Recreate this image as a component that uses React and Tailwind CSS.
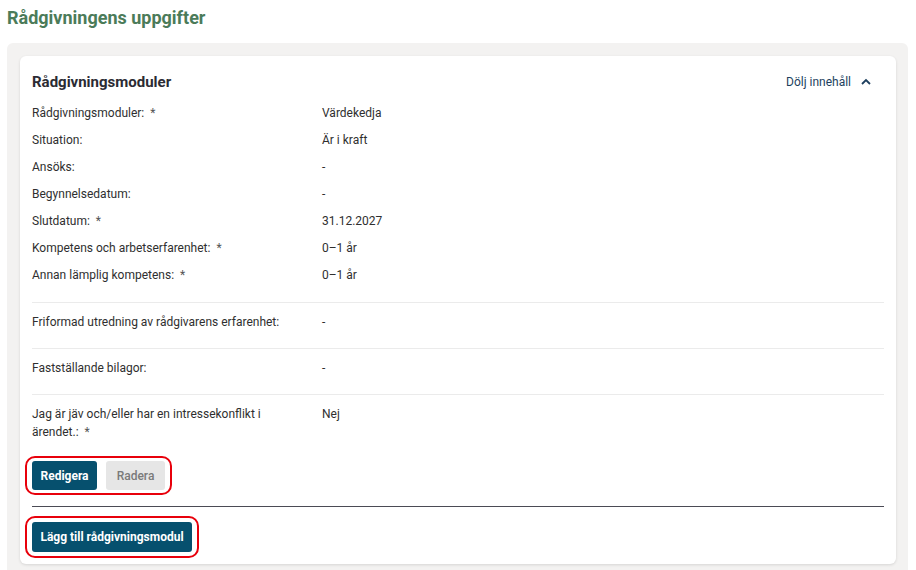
import React from 'react'

const FONT = { fontFamily: 'Roboto, "Liberation Sans", sans-serif' }

const basicRows = [
  { label: 'Rådgivningsmoduler:', required: true, value: 'Värdekedja' },
  { label: 'Situation:', value: 'Är i kraft' },
  { label: 'Ansöks:', value: '-' },
  { label: 'Begynnelsedatum:', value: '-' },
  { label: 'Slutdatum:', required: true, value: '31.12.2027' },
  { label: 'Kompetens och arbetserfarenhet:', required: true, value: '0–1 år' },
  { label: 'Annan lämplig kompetens:', required: true, value: '0–1 år' },
]

const sections = [
  { label: 'Friformad utredning av rådgivarens erfarenhet:', value: '-' },
  { label: 'Fastställande bilagor:', value: '-' },
  { label: 'Jag är jäv och/eller har en intressekonflikt i ärendet.:', required: true, value: 'Nej' },
]

function Label({ text, required }) {
  return (
    <span>
      {text}
      {required && <span className="ml-[6px] text-[#555]">*</span>}
    </span>
  )
}

export default function App() {
  return (
    <div className="min-h-screen bg-white pl-[7px] pr-[8px] text-[#2f2f2f]" style={FONT}>
      <h1 className="pt-[6px] text-[18px] font-bold leading-6 text-[#4b7b59]">
        Rådgivningens uppgifter
      </h1>

      <div className="mt-[13px] rounded-t-md bg-[#f3f2f1] pl-[13px] pr-[12px] pt-[13px] pb-[7px]">
        <div className="rounded-md bg-white px-3 pt-[14px] pb-[6px] shadow-[0_1px_3px_rgba(0,0,0,0.12)]">
          {/* Header */}
          <div className="flex items-center justify-between">
            <h2 className="text-[15px] font-bold leading-6 text-[#2b2b33]">Rådgivningsmoduler</h2>
            <button className="mr-[12px] flex items-center gap-[9px] text-[12px] text-[#1d3f5e]">
              Dölj innehåll
              <svg width="12" height="12" viewBox="0 0 12 12" fill="none" stroke="currentColor" strokeWidth="1.8">
                <path d="M2 8 L6 4 L10 8" />
              </svg>
            </button>
          </div>

          {/* Basic rows */}
          <div className="mt-[6px] pb-[13px]">
            {basicRows.map((row) => (
              <div key={row.label} className="grid grid-cols-[290px_1fr] text-[12px] leading-[27px]">
                <Label text={row.label} required={row.required} />
                <span>{row.value}</span>
              </div>
            ))}
          </div>

          {sections.map((row, i) => (
            <div
              key={row.label}
              className={`grid grid-cols-[290px_1fr] border-t border-[#ebebeb] pt-[10px] text-[12px] leading-[18px] ${
                i === sections.length - 1 ? 'pb-0' : 'pb-[17px]'
              }`}
            >
              <div className="pr-6">
                <Label text={row.label} required={row.required} />
              </div>
              <span>{row.value}</span>
            </div>
          ))}

          {/* Actions */}
          <div className="mt-[15px] -ml-[7px] inline-flex gap-[9px] rounded-[10px] border-2 border-[#e8000b] px-[5px] py-[3px]">
            <button className="h-[29px] w-[65px] rounded-[3px] bg-[#06506e] text-[12px] font-bold text-white">
              Redigera
            </button>
            <button className="h-[29px] w-[59px] rounded-[3px] bg-[#e6e6e6] text-[12px] font-medium text-[#7a7a7a]">
              Radera
            </button>
          </div>

          <div className="mt-[11px] border-t border-[#4b4b55]" />

          <div className="mt-[9px] -ml-[7px] inline-flex rounded-[10px] border-2 border-[#e8000b] px-[5px] py-[4px]">
            <button className="h-[30px] w-[160px] rounded-[3px] bg-[#06506e] text-[12px] font-bold text-white">
              Lägg till rådgivningsmodul
            </button>
          </div>
        </div>
      </div>
    </div>
  )
}
